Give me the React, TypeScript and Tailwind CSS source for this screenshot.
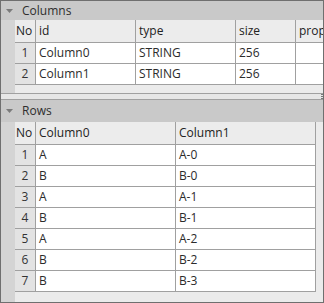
import React from 'react';

interface ICol {
    title: string;
    width: string;
}

const line = 'border-[#a0a0a0]';

const Caret: React.FC = () => (
    <svg width="7" height="4" viewBox="0 0 7 4" className="block">
        <path d="M0 0 L7 0 L3.5 4 Z" fill="#7b7b7b" />
    </svg>
);

const Band: React.FC<{ title: string; h: string }> = ({ title, h }) => (
    <div className={`flex items-center bg-[#c9c9c9] ${h} shrink-0`}>
        <div className="w-[15px] flex justify-center pl-[1px]">
            <Caret />
        </div>
        <span className="pl-[6px] text-[#2e2e2e]">{title}</span>
    </div>
);

const Grid: React.FC<{ cols: ICol[]; rows: string[][]; fill?: boolean }> = ({ cols, rows, fill }) => {
    return (
        <div className="flex flex-col">
            <div className={`flex h-[23px] bg-[#ececec] border-b ${line} ${fill ? 'w-full' : 'w-fit'}`}>
                <div className={`w-[21px] shrink-0 flex items-center pl-[1px] border-r ${line} text-[#222]`}>No</div>
                {cols.map((c, i) => (
                    <div
                        key={c.title}
                        className={`${c.width} shrink-0 flex items-center pl-[3px] text-[#222] overflow-hidden whitespace-nowrap ${i < cols.length - 1 || !fill ? `border-r ${line}` : ''}`}
                    >
                        {c.title}
                    </div>
                ))}
            </div>
            {rows.map((r, ri) => (
                <div key={ri} className={`flex h-[21px] border-b ${line} ${fill ? 'w-full' : 'w-fit'}`}>
                    <div className={`w-[21px] shrink-0 flex items-center justify-center bg-[#e3e3e3] border-r ${line} text-[#333]`}>
                        {ri + 1}
                    </div>
                    {cols.map((c, i) => (
                        <div
                            key={c.title}
                            className={`${c.width} shrink-0 flex items-center pl-[3px] bg-white text-[#2b2b2b] whitespace-nowrap ${i < cols.length - 1 || !fill ? `border-r ${line}` : ''}`}
                        >
                            {r[i]}
                        </div>
                    ))}
                </div>
            ))}
        </div>
    );
};

const App: React.FC = () => {
    const colCols: ICol[] = [
        { title: 'id', width: 'w-[100px]' },
        { title: 'type', width: 'w-[100px]' },
        { title: 'size', width: 'w-[60px]' },
        { title: 'properties', width: 'w-[40px]' },
    ];
    const colRows = [
        ['Column0', 'STRING', '256', ''],
        ['Column1', 'STRING', '256', ''],
    ];
    const rowCols: ICol[] = [
        { title: 'Column0', width: 'w-[140px]' },
        { title: 'Column1', width: 'w-[140px]' },
    ];
    const rowRows = [
        ['A', 'A-0'],
        ['B', 'B-0'],
        ['A', 'A-1'],
        ['B', 'B-1'],
        ['A', 'A-2'],
        ['B', 'B-2'],
        ['B', 'B-3'],
    ];

    return (
        <div
            className="w-[324px] h-[303px] border border-[#6f6f6f] bg-[#e9e9e9] flex flex-col overflow-hidden text-[12px] leading-none"
            style={{ fontFamily: '"Open Sans", "Noto Sans", sans-serif' }}
        >
            <Band title="Columns" h="h-[19px]" />
            <div className="flex">
                <div className="w-[14px] shrink-0 bg-[#d4d4d4]" />
                <div className="flex-1 overflow-hidden">
                    <Grid cols={colCols} rows={colRows} fill />
                    <div className="h-[8px] bg-[#ebebeb]" />
                </div>
            </div>
            <div className={`h-[7px] shrink-0 border-t border-b ${line} bg-[#e6e6e6] relative`}>
                <div className="absolute right-[0px] top-[0px] w-[2px] h-[5px] flex flex-col justify-between">
                    <div className="h-[1px] bg-[#777]" />
                    <div className="h-[1px] bg-[#777]" />
                    <div className="h-[1px] bg-[#777]" />
                </div>
            </div>
            <Band title="Rows" h="h-[22px]" />
            <div className="flex flex-1">
                <div className="w-[14px] shrink-0 bg-[#d4d4d4]" />
                <div className="flex-1 overflow-hidden bg-[#ebebeb]">
                    <Grid cols={rowCols} rows={rowRows} />
                </div>
            </div>
        </div>
    );
};

export default App;
